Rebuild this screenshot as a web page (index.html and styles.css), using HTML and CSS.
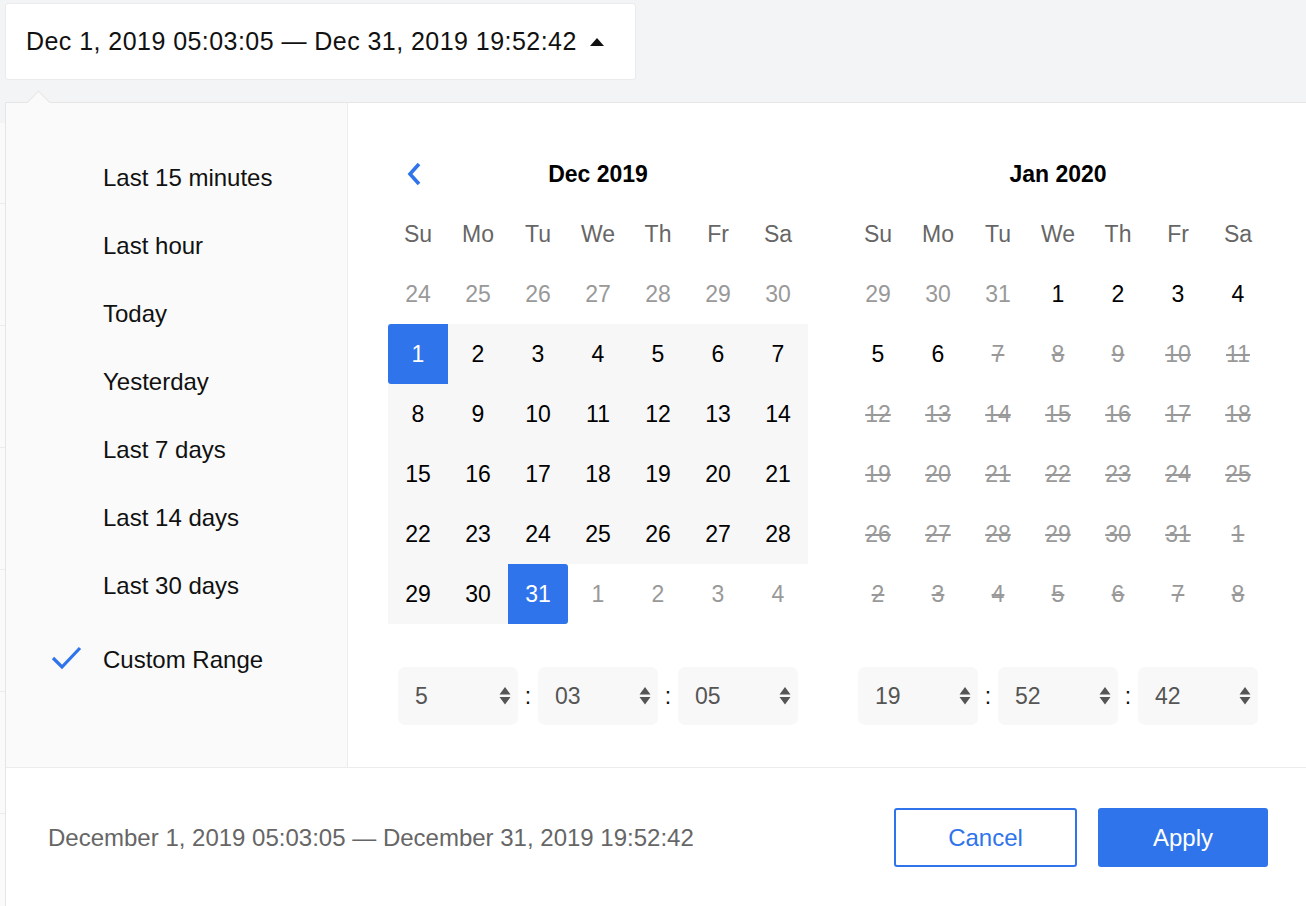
FILE: index.html
```html
<!DOCTYPE html>
<html lang="en">
<head>
<meta charset="utf-8">
<title>Date range picker</title>
<link rel="stylesheet" href="styles.css">
</head>
<body>
<div class="page">
  <div class="trigger">
    <span class="trigger-text">Dec 1, 2019 05:03:05 — Dec 31, 2019 19:52:42</span>
    <span class="trigger-caret"></span>
  </div>

  <div class="bg-table">
    <div class="bg-row bg-head"></div>
    <div class="bg-row"></div>
    <div class="bg-row"></div>
    <div class="bg-row"></div>
    <div class="bg-row"></div>
    <div class="bg-row"></div>
    <div class="bg-row"></div>
  </div>

  <div class="popup">
    <span class="popup-arrow"></span>
    <div class="popup-main">
      <ul class="ranges">
        <li class="range">Last 15 minutes</li>
        <li class="range">Last hour</li>
        <li class="range">Today</li>
        <li class="range">Yesterday</li>
        <li class="range">Last 7 days</li>
        <li class="range">Last 14 days</li>
        <li class="range">Last 30 days</li>
        <li class="range range-active">
          <svg class="check" width="32" height="26" viewBox="0 0 32 26"><polyline points="2,13 11,22 29,3" fill="none" stroke="#2f74eb" stroke-width="3.2" stroke-linecap="butt" stroke-linejoin="miter"/></svg>
          Custom Range
        </li>
      </ul>

      <div class="calendars">
        <div class="cal">
          <div class="cal-head">
            <svg class="prev" width="18" height="24" viewBox="0 0 18 24"><polyline points="14,2 5,12 14,22" fill="none" stroke="#2f74eb" stroke-width="3.6"/></svg>
            <span class="cal-title">Dec 2019</span>
          </div>
          <div class="grid">
            <div class="wd">Su</div><div class="wd">Mo</div><div class="wd">Tu</div><div class="wd">We</div><div class="wd">Th</div><div class="wd">Fr</div><div class="wd">Sa</div>

            <div class="d off">24</div><div class="d off">25</div><div class="d off">26</div><div class="d off">27</div><div class="d off">28</div><div class="d off">29</div><div class="d off">30</div>

            <div class="d sel sel-start">1</div><div class="d in">2</div><div class="d in">3</div><div class="d in">4</div><div class="d in">5</div><div class="d in">6</div><div class="d in">7</div>

            <div class="d in">8</div><div class="d in">9</div><div class="d in">10</div><div class="d in">11</div><div class="d in">12</div><div class="d in">13</div><div class="d in">14</div>

            <div class="d in">15</div><div class="d in">16</div><div class="d in">17</div><div class="d in">18</div><div class="d in">19</div><div class="d in">20</div><div class="d in">21</div>

            <div class="d in">22</div><div class="d in">23</div><div class="d in">24</div><div class="d in">25</div><div class="d in">26</div><div class="d in">27</div><div class="d in">28</div>

            <div class="d in">29</div><div class="d in">30</div><div class="d sel sel-end">31</div><div class="d off">1</div><div class="d off">2</div><div class="d off">3</div><div class="d off">4</div>
          </div>
          <div class="time">
            <div class="tsel"><span>5</span><svg class="updown" width="12" height="20" viewBox="0 0 12 20"><path d="M6 1 L11.5 8.5 H0.5 Z M0.5 11 H11.5 L6 18.5 Z" fill="#555"/></svg></div>
            <span class="colon">:</span>
            <div class="tsel"><span>03</span><svg class="updown" width="12" height="20" viewBox="0 0 12 20"><path d="M6 1 L11.5 8.5 H0.5 Z M0.5 11 H11.5 L6 18.5 Z" fill="#555"/></svg></div>
            <span class="colon">:</span>
            <div class="tsel"><span>05</span><svg class="updown" width="12" height="20" viewBox="0 0 12 20"><path d="M6 1 L11.5 8.5 H0.5 Z M0.5 11 H11.5 L6 18.5 Z" fill="#555"/></svg></div>
          </div>
        </div>

        <div class="cal">
          <div class="cal-head">
            <span class="cal-title">Jan 2020</span>
          </div>
          <div class="grid">
            <div class="wd">Su</div><div class="wd">Mo</div><div class="wd">Tu</div><div class="wd">We</div><div class="wd">Th</div><div class="wd">Fr</div><div class="wd">Sa</div>

            <div class="d off">29</div><div class="d off">30</div><div class="d off">31</div><div class="d">1</div><div class="d">2</div><div class="d">3</div><div class="d">4</div>

            <div class="d">5</div><div class="d">6</div><div class="d dis">7</div><div class="d dis">8</div><div class="d dis">9</div><div class="d dis">10</div><div class="d dis">11</div>

            <div class="d dis">12</div><div class="d dis">13</div><div class="d dis">14</div><div class="d dis">15</div><div class="d dis">16</div><div class="d dis">17</div><div class="d dis">18</div>

            <div class="d dis">19</div><div class="d dis">20</div><div class="d dis">21</div><div class="d dis">22</div><div class="d dis">23</div><div class="d dis">24</div><div class="d dis">25</div>

            <div class="d dis">26</div><div class="d dis">27</div><div class="d dis">28</div><div class="d dis">29</div><div class="d dis">30</div><div class="d dis">31</div><div class="d dis">1</div>

            <div class="d dis">2</div><div class="d dis">3</div><div class="d dis">4</div><div class="d dis">5</div><div class="d dis">6</div><div class="d dis">7</div><div class="d dis">8</div>
          </div>
          <div class="time">
            <div class="tsel"><span>19</span><svg class="updown" width="12" height="20" viewBox="0 0 12 20"><path d="M6 1 L11.5 8.5 H0.5 Z M0.5 11 H11.5 L6 18.5 Z" fill="#555"/></svg></div>
            <span class="colon">:</span>
            <div class="tsel"><span>52</span><svg class="updown" width="12" height="20" viewBox="0 0 12 20"><path d="M6 1 L11.5 8.5 H0.5 Z M0.5 11 H11.5 L6 18.5 Z" fill="#555"/></svg></div>
            <span class="colon">:</span>
            <div class="tsel"><span>42</span><svg class="updown" width="12" height="20" viewBox="0 0 12 20"><path d="M6 1 L11.5 8.5 H0.5 Z M0.5 11 H11.5 L6 18.5 Z" fill="#555"/></svg></div>
          </div>
        </div>
      </div>
    </div>

    <div class="popup-footer">
      <span class="summary">December 1, 2019 05:03:05 — December 31, 2019 19:52:42</span>
      <div class="actions">
        <button class="btn btn-cancel">Cancel</button>
        <button class="btn btn-apply">Apply</button>
      </div>
    </div>
  </div>
</div>
</body>
</html>
```

FILE: styles.css
```css
* { box-sizing: border-box; }

html, body {
  margin: 0;
  padding: 0;
}

body {
  background: #f3f4f6;
  font-family: "Liberation Sans", Arial, Helvetica, sans-serif;
  color: #000;
  width: 1306px;
  height: 906px;
  overflow: hidden;
}

.page {
  position: relative;
  width: 1306px;
  height: 906px;
  padding-top: 3px;
}

/* trigger */
.trigger {
  margin-left: 5px;
  width: 631px;
  height: 77px;
  background: #fff;
  border: 1px solid #ebebeb;
  border-radius: 3px;
  display: flex;
  align-items: center;
  padding-left: 20px;
  font-size: 25px;
  color: #111;
  letter-spacing: 0.45px;
}

.trigger-caret {
  margin-left: 13px;
  width: 0;
  height: 0;
  border-left: 7px solid transparent;
  border-right: 7px solid transparent;
  border-bottom: 8px solid #111;
}

/* background table peeking out at the left */
.bg-table {
  margin-top: 43px;
  background: #fafafa;
}

.bg-row {
  height: 122px;
  border-bottom: 1px solid #ececec;
}

.bg-row.bg-head {
  height: 81px;
}

/* popup */
.popup {
  position: absolute;
  top: 102px;
  left: 5px;
  width: 1304px;
  background: #fff;
  border: 1px solid #e6e6e6;
}

.popup-arrow {
  position: absolute;
  top: -9px;
  left: 24px;
  width: 17px;
  height: 17px;
  background: #fafafa;
  border-top: 1px solid #e6e6e6;
  border-left: 1px solid #e6e6e6;
  transform: rotate(45deg);
}

.popup-main {
  display: flex;
  height: 664px;
}

.ranges {
  list-style: none;
  margin: 0;
  width: 342px;
  flex: none;
  background: #fafafa;
  border-right: 1px solid #ececec;
  padding: 41px 0 0 97px;
  position: relative;
  z-index: 1;
}

.range {
  height: 68px;
  display: flex;
  align-items: center;
  font-size: 24px;
  color: #111;
  position: relative;
}

.range-active {
  margin-top: 6px;
}

.check {
  position: absolute;
  left: -52px;
  top: 19px;
}

.calendars {
  display: flex;
  gap: 40px;
  padding: 41px 40px 0 40px;
}

.cal {
  width: 420px;
}

.cal-head {
  position: relative;
  height: 60px;
  display: flex;
  align-items: center;
  justify-content: center;
}

.prev {
  position: absolute;
  left: 17px;
  top: 18px;
}

.cal-title {
  font-weight: bold;
  font-size: 23px;
  color: #000;
}

.grid {
  display: grid;
  grid-template-columns: repeat(7, 60px);
  grid-auto-rows: 60px;
}

.wd, .d {
  display: flex;
  align-items: center;
  justify-content: center;
  font-size: 23px;
}

.wd {
  color: #666;
}

.d {
  color: #000;
}

.d.off {
  color: #999;
}

.d.dis {
  color: #999;
  text-decoration: line-through;
  text-decoration-thickness: 2px;
}

.d.in {
  background: #f7f7f7;
}

.d.sel {
  background: #2f74eb;
  color: #fff;
}

.d.sel-start {
  border-radius: 3px 0 0 3px;
}

.d.sel-end {
  border-radius: 0 3px 3px 0;
}

.time {
  margin-top: 43px;
  padding: 0 10px;
  display: flex;
  align-items: center;
}

.tsel {
  width: 120px;
  height: 58px;
  background: #f8f8f8;
  border-radius: 7px;
  display: flex;
  align-items: center;
  justify-content: space-between;
  padding: 0 7px 0 17px;
  font-size: 23px;
  color: #555;
}

.colon {
  width: 20px;
  text-align: center;
  font-size: 23px;
  color: #111;
}

/* footer */
.popup-footer {
  border-top: 1px solid #ececec;
  display: flex;
  align-items: center;
  justify-content: space-between;
  padding: 40px 40px 40px 42px;
  height: 140px;
}

.summary {
  font-size: 24px;
  color: #666;
}

.actions {
  display: flex;
  gap: 21px;
}

.btn {
  height: 59px;
  font-family: "Liberation Sans", Arial, Helvetica, sans-serif;
  font-size: 24px;
  border-radius: 3px;
  cursor: pointer;
}

.btn-cancel {
  width: 183px;
  background: #fff;
  color: #2f74eb;
  border: 2px solid #2f74eb;
}

.btn-apply {
  width: 170px;
  background: #2f74eb;
  color: #fff;
  border: 2px solid #2f74eb;
}
```
